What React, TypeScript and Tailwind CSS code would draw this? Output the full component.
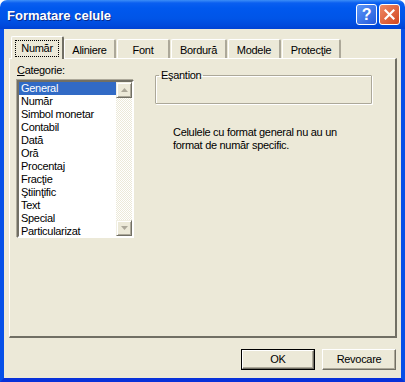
import React from "react"

const categories = [
  "General",
  "Număr",
  "Simbol monetar",
  "Contabil",
  "Dată",
  "Oră",
  "Procentaj",
  "Fracţie",
  "Ştiinţific",
  "Text",
  "Special",
  "Particularizat",
]

const tabs = [
  { label: "Număr", w: "w-[53px]", ml: "ml-0" },
  { label: "Aliniere", w: "w-[52px]", ml: "ml-0" },
  { label: "Font", w: "w-[53px]", ml: "ml-[1px]" },
  { label: "Bordură", w: "w-[56px]", ml: "ml-[1px]" },
  { label: "Modele", w: "w-[53px]", ml: "ml-[1px]" },
  { label: "Protecţie", w: "w-[59px]", ml: "ml-[1px]" },
]

function Arrow({ down }: { down?: boolean }) {
  return (
    <svg width="7" height="4" viewBox="0 0 7 4">
      <path d={down ? "M0 0 H7 L3.5 4 Z" : "M0 4 H7 L3.5 0 Z"} fill="#ACA899" />
    </svg>
  )
}

function ScrollButton({ down }: { down?: boolean }) {
  return (
    <div className="h-[16px] w-[16px] flex items-center justify-center bg-[#ECE9D8] border border-t-[#F1EFE2] border-l-[#F1EFE2] border-r-[#716F64] border-b-[#716F64] shadow-[inset_1px_1px_0_#ffffff,inset_-1px_-1px_0_#ACA899]">
      <Arrow down={down} />
    </div>
  )
}

export default function App() {
  return (
    <div className="w-[405px] h-[382px] bg-white font-['Liberation_Sans',Arial,sans-serif] text-[11px] leading-[13px] tracking-[-0.3px] text-black">
      <div className="w-full h-full flex flex-col">
        {/* Title bar */}
        <div className="h-[29px] rounded-t-[7px] flex items-center pl-[7px] pr-[5px] bg-[linear-gradient(to_bottom,#3C8DF7_0px,#0A5FF0_3px,#0058EE_8px,#0055E8_18px,#004BDD_25px,#0042D3_29px)]">
          <span className="flex-1 text-white font-bold text-[13px] tracking-normal pt-[1px] [text-shadow:1px_1px_0_#0A2A8A]">
            Formatare celule
          </span>
          <div className="h-[21px] w-[21px] rounded-[3px] border border-white flex items-center justify-center bg-[linear-gradient(135deg,#5B97F8,#2459DB)] text-white font-bold text-[16px] leading-none">
            ?
          </div>
          <div className="ml-[2px] h-[21px] w-[21px] rounded-[3px] border border-white flex items-center justify-center bg-[linear-gradient(135deg,#EF8A67,#D2461F)]">
            <svg width="11" height="11" viewBox="0 0 11 11">
              <path d="M1.5 1.5 L9.5 9.5 M9.5 1.5 L1.5 9.5" stroke="white" strokeWidth="2.2" strokeLinecap="square" />
            </svg>
          </div>
        </div>

        {/* Client area */}
        <div className="flex-1 flex flex-col bg-[#ECE9D8] border-x-4 border-b-4 border-x-[#0650E8] border-b-[#0831D9]">
          {/* Tabs */}
          <div className="flex items-end pl-[7px] mt-[7px] h-[22px] relative z-10">
            {tabs.map((t, i) =>
              i === 0 ? (
                <div
                  key={t.label}
                  className={`${t.w} ${t.ml} h-[23px] -mb-px bg-[#ECE9D8] border-l border-t border-white border-r-2 border-r-[#716F64] rounded-t-[2px] flex items-center justify-center pt-[1px]`}
                >
                  <span className="outline-1 outline-dotted outline-black px-[5px] py-[1px]">{t.label}</span>
                </div>
              ) : (
                <div
                  key={t.label}
                  className={`${t.w} ${t.ml} h-[19px] bg-[#ECE9D8] border-l border-t border-white border-r-2 border-r-[#ACA899] rounded-t-[2px] flex items-center justify-center pt-[2px]`}
                >
                  {t.label}
                </div>
              )
            )}
          </div>

          {/* Panel */}
          <div className="ml-[5px] w-[388px] h-[280px] border-l border-t border-white border-r-2 border-b-2 border-r-[#716F64] border-b-[#716F64] flex pl-[7px] pt-[5px]">
            {/* Category list */}
            <div className="flex flex-col">
              <div className="mb-[3px]">
                <span className="underline">C</span>ategorie:
              </div>
              <div className="w-[117px] h-[158px] bg-white border-2 border-t-[#716F64] border-l-[#716F64] border-r-white border-b-white shadow-[-1px_-1px_0_#ACA899] flex">
                <div className="flex-1 flex flex-col">
                  {categories.map((c, i) => (
                    <div
                      key={c}
                      className={`h-[13px] pl-[2px] whitespace-nowrap ${i === 0 ? "bg-[#316AC5] text-white" : ""}`}
                    >
                      {c}
                    </div>
                  ))}
                </div>
                <div className="w-[16px] flex flex-col">
                  <ScrollButton />
                  <div className="flex-1 bg-[repeating-conic-gradient(#ffffff_0%_25%,#ECE9D8_0%_50%)] bg-[length:2px_2px]" />
                  <ScrollButton down />
                </div>
              </div>
            </div>

            {/* Sample + description */}
            <div className="ml-[21px] flex flex-col">
              <fieldset className="mt-[5px] w-[217px] h-[35px] border border-[#ACA899] shadow-[inset_1px_1px_0_#ffffff,1px_1px_0_#ffffff] rounded-[1px]">
                <legend className="ml-[3px] px-[2px]">Eşantion</legend>
              </fieldset>
              <p className="ml-[18px] mt-[22px]">
                Celulele cu format general nu au un
                <br />
                format de număr specific.
              </p>
            </div>
          </div>

          {/* Buttons */}
          <div className="flex justify-end gap-[7px] mt-[11px] pr-[5px]">
            <div className="w-[74px] h-[21px] border border-black flex">
              <div className="flex-1 flex items-center justify-center border border-t-white border-l-white border-r-[#716F64] border-b-[#716F64] shadow-[inset_-1px_-1px_0_#ACA899]">
                OK
              </div>
            </div>
            <div className="w-[74px] h-[21px] flex items-center justify-center border border-t-white border-l-white border-r-[#716F64] border-b-[#716F64] shadow-[inset_-1px_-1px_0_#ACA899]">
              Revocare
            </div>
          </div>
        </div>
      </div>
    </div>
  )
}
